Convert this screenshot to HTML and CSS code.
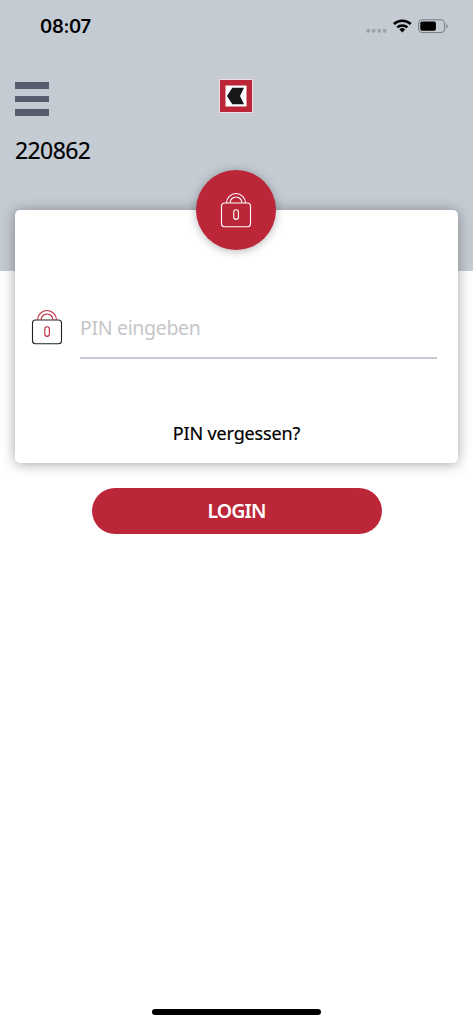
FILE: index.html
```html
<!DOCTYPE html>
<html lang="de">
<head>
<meta charset="utf-8">
<title>Login</title>
<link rel="stylesheet" href="styles.css">
</head>
<body>
<div class="screen">
  <header class="header">
    <div class="status">
      <span class="clock">08:07</span>
      <svg class="indicators" width="84" height="20" viewBox="0 0 84 20">
        <g fill="#9ea2aa"><circle cx="3.2" cy="14.7" r="2"/><circle cx="8.7" cy="14.7" r="2"/><circle cx="14.2" cy="14.7" r="2"/><circle cx="19.7" cy="14.7" r="2"/></g>
        <g fill="none" stroke="#000" stroke-width="2.6"><path d="M28.9 8a12.4 12.4 0 0 1 16.8 0"/><path d="M32.2 11.4a7.6 7.6 0 0 1 10.2 0"/></g>
        <path d="M37.3 16.4l-2.9-2.9a4.2 4.2 0 0 1 5.8 0z"/>
        <rect x="53.6" y="3.7" width="26" height="12.8" rx="3.8" fill="none" stroke="#7c8087" stroke-width="1.1"/>
        <rect x="55.3" y="5.4" width="15.6" height="9.4" rx="1.8"/>
        <path d="M81.4 8c1.9.9 1.9 3.4 0 4.4z" fill="#7c8087"/>
      </svg>
    </div>
    <div class="nav">
      <div class="menu"><i></i><i></i><i></i></div>
      <svg class="logo" width="34" height="34" viewBox="0 0 34 34">
        <rect width="34" height="34" fill="#f0dde1"/>
        <rect x="1" y="1" width="32" height="32" fill="#bb2739"/>
        <rect x="6.5" y="6.5" width="21" height="21" fill="#fff"/>
        <path d="M13.3 8.7H25l-4 8.3 4 8.3H13.3L8 17z" fill="#171717"/>
      </svg>
    </div>
    <div class="account"><span>220862</span></div>
  </header>
  <main class="card">
    <div class="badge">
      <svg width="32" height="36" viewBox="0 0 32 36" fill="none" stroke="#fff" stroke-width="1.1">
        <rect x="1.5" y="11" width="29" height="23.7" rx="3"/>
        <path d="M6.5 11a9.5 9.5 0 0 1 19 0M10 11a6 6 0 0 1 12 0"/>
        <rect x="13.8" y="17.8" width="4.6" height="9.6" rx="2.3"/>
      </svg>
    </div>
    <div class="field">
      <svg width="32" height="36" viewBox="0 0 32 36" fill="none" stroke="#bb2739" stroke-width="1.1">
        <rect x="1.5" y="11" width="29" height="23.7" rx="3" stroke="#222"/>
        <path d="M6.5 11a9.5 9.5 0 0 1 19 0M10 11a6 6 0 0 1 12 0"/>
        <rect x="13.8" y="17.8" width="4.6" height="9.6" rx="2.3"/>
      </svg>
      <div class="input"><span>PIN eingeben</span></div>
    </div>
    <div class="forgot"><span>PIN vergessen?</span></div>
  </main>
  <div class="login"><span>LOGIN</span></div>
  <div class="home"></div>
</div>
</body>
</html>
```
FILE: styles.css
```css
* { box-sizing: border-box; }
body { margin: 0; background: #fff; font-family: "Noto Sans", "Open Sans", sans-serif; color: #000; }
svg { display: block; }
.screen { width: 473px; height: 1024px; display: flex; flex-direction: column; overflow: hidden; }
.header { height: 271px; flex: none; background: #c5cbd3; }
.status { height: 52px; padding: 0 24px 0 40px; display: flex; align-items: center; justify-content: space-between; }
.clock { font: 600 18.5px/24px Inter, sans-serif; letter-spacing: -0.3px; }
.nav { height: 76px; padding: 28px 16px 0 15px; display: grid; grid-template-columns: 35px 1fr 35px; }
.menu { display: flex; flex-direction: column; gap: 7px; padding-top: 2px; }
.menu i { display: block; width: 34px; height: 6.7px; background: #555c6b; }
.logo { justify-self: center; margin-top: -1px; }
.account { padding: 6px 15px; font-size: 23px; line-height: 32px; letter-spacing: -0.6px; -webkit-text-stroke: 0.2px #000; }
.card { flex: none; width: 443px; height: 253.5px; margin: -61.5px 15px 0; background: #fff; border-radius: 5px; box-shadow: 0 1px 13px rgba(0, 0, 0, .36); display: flex; flex-direction: column; align-items: center; }
.badge { flex: none; width: 80px; height: 80px; margin: -40px 1px 0 0; border-radius: 50%; background: #bb2739; box-shadow: 0 1px 10px rgba(0, 0, 0, .3); display: flex; align-items: center; justify-content: center; }
.field { width: 100%; margin-top: 59.5px; padding: 0 21px 0 16px; display: flex; gap: 17px; }
.input { flex: 1; height: 50px; border-bottom: 2px solid #c5cbd3; font-size: 19.5px; line-height: 37px; letter-spacing: -0.33px; color: #c6c6c9; }
.forgot { margin-top: 60px; font-size: 18px; line-height: 28px; letter-spacing: -0.15px; -webkit-text-stroke: 0.2px #000; }
.login { flex: none; width: 290px; height: 46px; margin: 25px 0 0 91.5px; border-radius: 23px; background: #bb2739; color: #fff; font-size: 19.5px; line-height: 45px; font-weight: 600; letter-spacing: -0.9px; text-align: center; }
.home { width: 169px; height: 6px; margin: auto auto 9px; border-radius: 3px; background: #000; }
```
